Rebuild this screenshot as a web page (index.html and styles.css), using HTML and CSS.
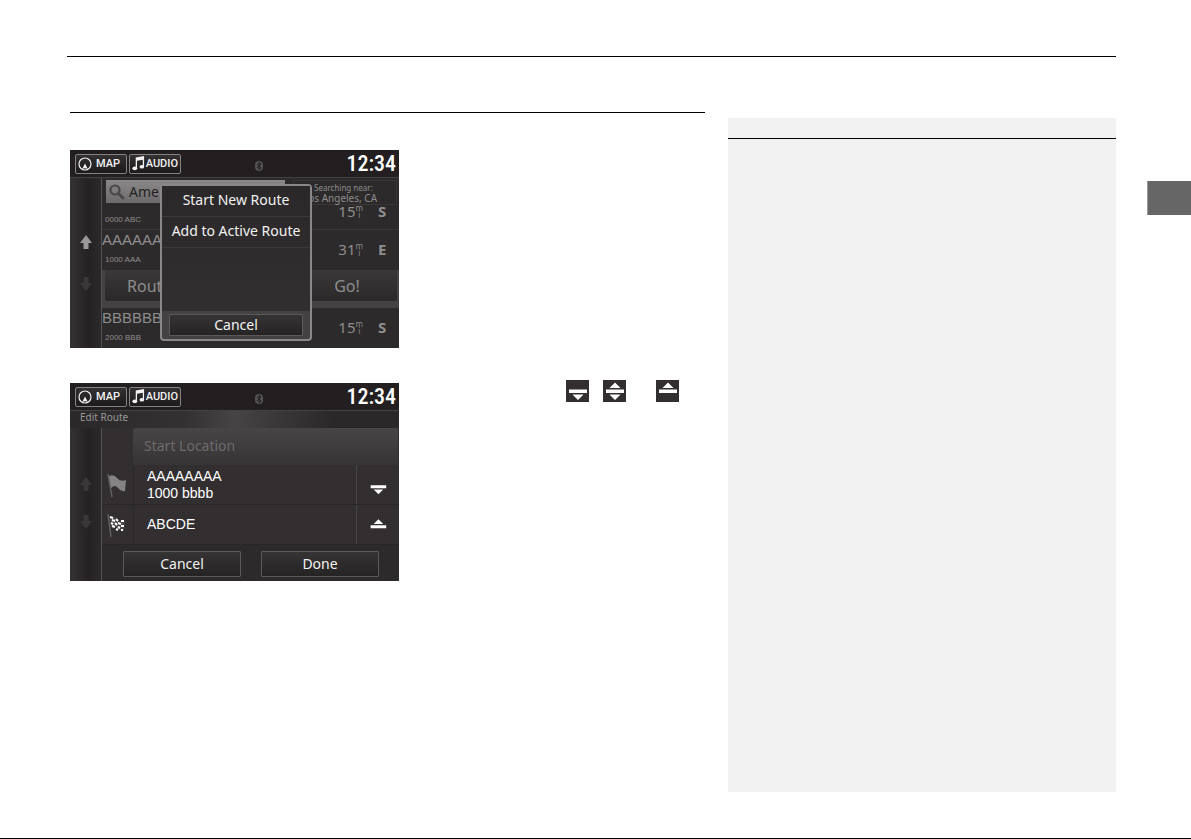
FILE: index.html
```html
<!DOCTYPE html>
<html lang="en">
<head>
    <meta charset="UTF-8">
    <meta name="viewport" content="width=device-width, initial-scale=1.0">
    <title>Edit Route</title>
    <link rel="stylesheet" href="styles.css">
</head>
<body>
    <!-- Shared icons -->
    <svg class="sprite" aria-hidden="true">
        <symbol id="compass" viewBox="0 0 14 14">
            <circle cx="7" cy="7" r="6" fill="none" stroke="currentColor" stroke-width="1.2"/>
            <path d="M7 6.5 9.8 12Q7 10.6 4.2 12Z" fill="currentColor"/>
        </symbol>
        <symbol id="note" viewBox="0 0 14 16">
            <path d="M4 1.5 13 0V11.5H11.6V4L5.4 5V13.5H4Z" fill="currentColor"/>
            <ellipse cx="3" cy="13.2" rx="2.6" ry="2" fill="currentColor"/>
            <ellipse cx="10.6" cy="11.5" rx="2.5" ry="2" fill="currentColor"/>
        </symbol>
        <symbol id="bluetooth" viewBox="0 0 8 10">
            <rect width="8" height="10" rx="4" fill="currentColor"/>
            <path d="M2 3 6 7 4 8.8V1.2L6 3 2 7" fill="none" stroke="#231f20"/>
        </symbol>
        <symbol id="arrow-up" viewBox="0 0 12 14">
            <path d="M6 0 12 8H8.5V14H3.5V8H0Z" fill="currentColor"/>
        </symbol>
        <symbol id="arrow-down" viewBox="0 0 12 14">
            <path d="M6 14 12 6H8.5V0H3.5V6H0Z" fill="currentColor"/>
        </symbol>
        <symbol id="move-down" viewBox="0 0 23 22">
            <path d="M3 9.5H21V13H3ZM6.5 14.5H17.5L12 20Z" fill="currentColor"/>
        </symbol>
        <symbol id="move-both" viewBox="0 0 23 22">
            <path d="M3 9.5H21V13H3ZM6.5 14.5H17.5L12 20ZM6.5 8H17.5L12 2.5Z" fill="currentColor"/>
        </symbol>
        <symbol id="move-up" viewBox="0 0 23 22">
            <path d="M3 9.5H21V13H3ZM6.5 8H17.5L12 2.5Z" fill="currentColor"/>
        </symbol>
    </svg>

    <header class="page-header"></header>

    <div class="page-body">
        <main class="content">
            <section class="step">
                <div class="screen">
                    <div class="top-bar">
                        <button class="top-button"><svg class="compass-icon"><use href="#compass"/></svg>MAP</button>
                        <button class="top-button"><svg class="note-icon"><use href="#note"/></svg>AUDIO</button>
                        <svg class="bluetooth-icon"><use href="#bluetooth"/></svg>
                        <span class="clock">12:34</span>
                    </div>
                    <div class="screen-body">
                        <div class="scroll-bar">
                            <button class="scroll-button active" aria-label="Scroll up"><svg><use href="#arrow-up"/></svg></button>
                            <button class="scroll-button" aria-label="Scroll down"><svg><use href="#arrow-down"/></svg></button>
                        </div>
                        <div class="results">
                            <div class="search-row">
                                <label class="search-box">
                                    <svg viewBox="0 0 16 16" aria-hidden="true">
                                        <circle cx="6" cy="6" r="4.5" fill="none" stroke="#4b4849" stroke-width="2.2"/>
                                        <path d="M9.5 9.5 14 14" stroke="#4b4849" stroke-width="3" stroke-linecap="round"/>
                                    </svg>
                                    <input type="text" value="Ame" aria-label="Search">
                                </label>
                                <button class="near-button"><small>Searching near:</small>Los Angeles, CA</button>
                            </div>
                            <div class="result first">
                                <div class="place"><small>0000 ABC</small></div>
                                <span class="distance">15<span class="unit"><i>m</i><i>i</i></span></span>
                                <b class="heading">S</b>
                            </div>
                            <div class="result">
                                <div class="place">AAAAAA<small>1000 AAA</small></div>
                                <span class="distance">31<span class="unit"><i>m</i><i>i</i></span></span>
                                <b class="heading">E</b>
                            </div>
                            <div class="result-actions">
                                <button>Route</button>
                                <button>Go!</button>
                            </div>
                            <div class="result">
                                <div class="place">BBBBBB<small>2000 BBB</small></div>
                                <span class="distance">15<span class="unit"><i>m</i><i>i</i></span></span>
                                <b class="heading">S</b>
                            </div>
                        </div>
                    </div>
                    <div class="popup" role="dialog" aria-label="Route options">
                        <div class="popup-options">
                            <button>Start New Route</button>
                            <button>Add to Active Route</button>
                        </div>
                        <button class="screen-button">Cancel</button>
                    </div>
                </div>
            </section>

            <section class="step">
                <div class="screen">
                    <div class="top-bar">
                        <button class="top-button"><svg class="compass-icon"><use href="#compass"/></svg>MAP</button>
                        <button class="top-button"><svg class="note-icon"><use href="#note"/></svg>AUDIO</button>
                        <svg class="bluetooth-icon"><use href="#bluetooth"/></svg>
                        <span class="clock">12:34</span>
                    </div>
                    <div class="screen-title">Edit Route</div>
                    <div class="screen-body">
                        <div class="scroll-bar edit">
                            <button class="scroll-button" aria-label="Scroll up"><svg><use href="#arrow-up"/></svg></button>
                            <button class="scroll-button" aria-label="Scroll down"><svg><use href="#arrow-down"/></svg></button>
                        </div>
                        <div class="route">
                            <button class="start-location">Start Location</button>
                            <div class="stop">
                                <svg class="flag" viewBox="0 0 22 26" aria-hidden="true">
                                    <path d="M2 2 6 25" stroke="#625f60" stroke-width="1.5"/>
                                    <path d="M3 4Q8 2 11 6T20 8L19 19Q15 20 12 16T5 16Z" fill="#858384"/>
                                </svg>
                                <div class="stop-name">AAAAAAAA<span>1000 bbbb</span></div>
                                <button class="move" aria-label="Move down"><svg><use href="#move-down"/></svg></button>
                            </div>
                            <div class="stop">
                                <svg class="flag" viewBox="0 0 22 26" aria-hidden="true">
                                    <path d="M2 2 5 25" stroke="#625f60" stroke-width="1.5"/>
                                    <path d="M3 4Q8 4 11 8T19 9L18 19Q14 20 11 16T5 15Z" fill="#4a4748"/>
                                    <path d="M4 5l3 1M10 7l2 2M15 9h3M6 8l3 1M12 11l3 1M5 11l2 1M9 11l2 2M15 14h3M6 14l3 1M12 15l2 1M10 17l2 1M15 18h2" stroke="#fff" stroke-width="2"/>
                                </svg>
                                <div class="stop-name">ABCDE</div>
                                <button class="move" aria-label="Move up"><svg><use href="#move-up"/></svg></button>
                            </div>
                            <div class="route-actions">
                                <button class="screen-button">Cancel</button>
                                <button class="screen-button">Done</button>
                            </div>
                        </div>
                    </div>
                </div>
                <div class="inline-icons">
                    <svg><use href="#move-down"/></svg>
                    <svg><use href="#move-both"/></svg>
                    <svg class="last"><use href="#move-up"/></svg>
                </div>
            </section>
        </main>

        <aside class="notes">
            <div class="notes-header"></div>
        </aside>
    </div>

    <div class="chapter-tab"></div>
</body>
</html>
```
FILE: styles.css
```css
* {
    box-sizing: border-box;
}

body {
    display: flex;
    flex-direction: column;
    position: relative;
    min-height: 100vh;
    margin: 0;
    background: #fff;
    border-bottom: 1px solid #000;
    font-family: "Noto Sans", sans-serif;
    font-size: 14px;
}

button {
    margin: 0;
    padding: 0;
    border: none;
    background: none;
    color: inherit;
    font: inherit;
    cursor: pointer;
}

svg {
    display: block;
    flex: none;
}

.sprite {
    position: absolute;
    width: 0;
    height: 0;
}

.page-header {
    height: 57px;
    margin: 0 75px 0 67px;
    border-bottom: 1px solid #000;
}

.page-body {
    display: grid;
    grid-template-columns: 635fr 388fr;
    gap: 23px;
    flex: 1;
    padding: 55px 75px 46px 70px;
}

.content {
    border-top: 1px solid #000;
    padding-top: 37px;
}

.notes {
    margin-top: 6px;
    background: #f2f2f2;
}

.notes-header {
    height: 21px;
    border-bottom: 1px solid #000;
}

.chapter-tab {
    position: absolute;
    top: 181px;
    right: 0;
    width: 44px;
    height: 34px;
    background: #666;
    border-left: 1px solid #999;
}

.step {
    display: flex;
    justify-content: space-between;
    align-items: flex-start;
    margin-bottom: 35px;
}

.inline-icons {
    display: flex;
    gap: 14px;
    margin-top: -3px;
    padding-right: 26px;
}

.inline-icons svg {
    width: 23px;
    height: 22px;
    background: #332f31;
    color: #fff;
}

.inline-icons .last {
    margin-left: 16px;
}

/* Navigation screens */
.screen {
    position: relative;
    width: 329px;
    background: #2d2a2b;
    color: #f2f2f2;
    overflow: hidden;
}

.top-bar {
    display: flex;
    align-items: center;
    gap: 2px;
    height: 28px;
    padding: 0 3px 0 5px;
    background: #231f20;
    border-bottom: 1px solid #454243;
}

.top-button {
    display: flex;
    align-items: center;
    justify-content: space-between;
    width: 52px;
    height: 20px;
    padding: 0 6px 0 2px;
    border: 1px solid #848283;
    border-radius: 2px;
    background: linear-gradient(#343132, #1d1a1b);
    font: 500 11px Roboto, sans-serif;
}

.top-button + .top-button {
    padding-right: 2px;
}

.compass-icon {
    width: 14px;
    height: 14px;
}

.note-icon {
    width: 13px;
    height: 15px;
}

.bluetooth-icon {
    width: 8px;
    height: 10px;
    margin: 5px 0 0 72px;
    color: #555253;
}

.clock {
    margin-left: auto;
    color: #fff;
    font: 500 22px "Liberation Sans Narrow", "Roboto Condensed", Roboto, sans-serif;
}

.screen-body {
    display: flex;
}

.scroll-bar {
    display: flex;
    flex-direction: column;
    align-items: center;
    gap: 28px;
    width: 32px;
    padding-top: 57px;
    border-right: 1px solid #555253;
    background: linear-gradient(90deg, #353233, #262223 60%, #2d2a2b);
}

.scroll-bar.edit {
    gap: 24px;
    padding-top: 49px;
}

.scroll-button {
    color: #3b3839;
}

.scroll-button.active {
    color: #9a9899;
}

.scroll-button svg {
    width: 12px;
    height: 14px;
}

/* Search results */
.results {
    flex: 1;
    color: #8f8d8e;
}

.search-row {
    display: flex;
    justify-content: space-between;
    height: 28px;
    padding: 2px 2px 0 4px;
}

.search-box {
    display: flex;
    align-items: center;
    gap: 4px;
    width: 179px;
    height: 23px;
    padding-left: 3px;
    background: linear-gradient(#8a8889, #6c6a6b);
}

.search-box svg {
    width: 16px;
    height: 16px;
}

.search-box input {
    flex: 1;
    min-width: 0;
    padding: 0;
    border: none;
    outline: none;
    background: none;
    color: #231f20;
    font: inherit;
}

.near-button {
    width: 104px;
    height: 25px;
    padding-left: 9px;
    border: 1px solid #393637;
    font-size: 10px;
    line-height: 11px;
    text-align: left;
    white-space: nowrap;
}

.near-button small {
    display: block;
    padding-left: 11px;
    font-size: 8px;
}

.result {
    display: flex;
    align-items: center;
    height: 40px;
    padding: 0 11px 2px 0;
}

.result.first {
    align-items: flex-start;
    height: 24px;
    padding-bottom: 0;
    border-bottom: 1px solid #3b3839;
    overflow: hidden;
}

.result.first .place {
    padding-top: 3px;
}

.result.first .distance,
.result.first .heading {
    margin-top: -5px;
}

.place {
    flex: 1;
    font: 15px/18px "Liberation Sans", Arial, sans-serif;
}

.place small {
    display: block;
    padding: 4px 0 0 3px;
    font-size: 8px;
    line-height: 14px;
}

.distance {
    display: flex;
    align-items: center;
    font-size: 15px;
    line-height: 20px;
}

.unit i {
    display: block;
    font-size: 8px;
    font-style: normal;
    line-height: 7px;
    text-align: center;
}

.heading {
    width: 10px;
    margin-left: 15px;
    font-size: 15px;
    line-height: 20px;
}

.result-actions {
    display: flex;
    justify-content: space-between;
    height: 38px;
    padding: 0 2px 7px 3px;
    background: #454243;
}

.result-actions button {
    width: 100px;
    border-radius: 0 0 2px 2px;
    background: linear-gradient(#3b3839, #2b2829);
    font-size: 16px;
}

.result-actions button:first-child {
    padding-left: 22px;
    text-align: left;
}

/* Route pop-up over the results */
.popup {
    position: absolute;
    top: 34px;
    left: 90px;
    width: 152px;
    border: 2px solid #8a8889;
    border-radius: 4px;
    background: #454243;
}

.popup-options {
    height: 125px;
    background: linear-gradient(#2b2829, #332f31);
}

.popup-options button {
    display: block;
    width: 100%;
    height: 31px;
    padding-bottom: 4px;
    border-bottom: 1px solid #3b3839;
}

.screen-button {
    height: 26px;
    border: 1px solid #5c595a;
    border-radius: 1px;
    background: linear-gradient(#363334, #262324);
}

.popup .screen-button {
    display: block;
    width: 134px;
    height: 22px;
    margin: 3px auto;
    line-height: 18px;
}

/* Route editing */
.screen-title {
    height: 17px;
    padding-left: 10px;
    background: linear-gradient(90deg, #2b2829, #343132 35%, #474445 50%, #2b2829 80%);
    color: #9a9899;
    font-size: 10px;
    line-height: 13px;
}

.route {
    flex: 1;
    background: #332f31;
}

.start-location {
    display: block;
    width: calc(100% - 32px);
    height: 37px;
    margin-left: 31px;
    padding: 0 0 2px 11px;
    border-radius: 3px 3px 0 0;
    background: linear-gradient(#484546, #373435);
    color: #6d6b6c;
    text-align: left;
}

.stop {
    display: flex;
    align-items: center;
    height: 40px;
    border-bottom: 1px solid #292627;
}

.flag {
    width: 22px;
    height: 26px;
    margin: 0 5px 0 4px;
}

.stop-name {
    flex: 1;
    align-self: stretch;
    display: flex;
    flex-direction: column;
    justify-content: center;
    padding-left: 13px;
    border-left: 1px solid #2b2829;
    color: #fff;
    font: 14px/17px "Liberation Sans", Arial, sans-serif;
}

.move {
    display: flex;
    align-items: center;
    justify-content: center;
    align-self: stretch;
    width: 43px;
    padding-top: 3px;
    border-left: 1px solid #474445;
    color: #fff;
}

.move svg {
    width: 20px;
    height: 19px;
}

.route-actions {
    display: flex;
    gap: 20px;
    height: 36px;
    padding: 6px 20px 0 21px;
    background: #2d2a2b;
}

.route-actions .screen-button {
    flex: 1;
    padding-bottom: 2px;
}
```
